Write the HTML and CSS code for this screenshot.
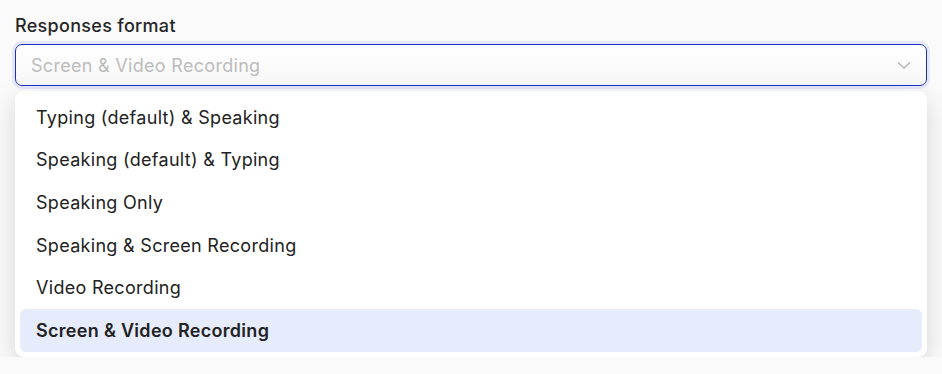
FILE: index.html
```html
<!DOCTYPE html>
<html>
<head>
  <link rel="stylesheet" href="styles.css">
</head>
<body>
<div class="field">
  <label class="field-label">Responses format</label>

  <!-- Select box (open) -->
  <div class="select">
    <span class="select-value">Screen &amp; Video Recording</span>
    <svg class="chevron" width="16" height="16" viewBox="0 0 16 16">
      <path d="M2 5.5 L8 11 L14 5.5" fill="none" stroke="#b4b4b4" stroke-width="1.3"/>
    </svg>
  </div>

  <!-- Options list -->
  <ul class="menu">
    <li class="option">Typing (default) &amp; Speaking</li>
    <li class="option">Speaking (default) &amp; Typing</li>
    <li class="option">Speaking Only</li>
    <li class="option">Speaking &amp; Screen Recording</li>
    <li class="option">Video Recording</li>
    <li class="option selected">Screen &amp; Video Recording</li>
  </ul>
</div>
</body>
</html>
```

FILE: styles.css
```css
/* Reset */
* {
  margin: 0;
  padding: 0;
  box-sizing: border-box;
}

body {
  background-color: #fafafa;
  font-family: Inter, "Noto Sans", sans-serif;
  letter-spacing: 0.3px;
  color: #222;
  padding: 15px 15px 0 15px;
}

.field {
  display: flex;
  flex-direction: column;
  width: 912px;
}

/* Label above the select */
.field-label {
  font-size: 18px;
  font-weight: 500;
  line-height: 22px;
  color: #262626;
  margin-bottom: 7px;
}

/* The select box itself */
.select {
  display: flex;
  align-items: center;
  justify-content: space-between;
  height: 42px;
  padding: 0 14px 0 15px;
  background: linear-gradient(#ffffff, #f7f7f7);
  border: 1.5px solid #1c31c4;
  border-radius: 7px;
  box-shadow: 0 0 0 3px rgba(70, 100, 235, 0.12);
}

.select-value {
  font-size: 18px;
  color: #bcbcbc;
}

.chevron {
  display: block;
}

/* Dropdown list */
.menu {
  list-style: none;
  margin-top: 5px;
  padding: 5px;
  background-color: #fff;
  border-radius: 9px;
  box-shadow: 0 8px 26px rgba(0, 0, 0, 0.15);
}

.option {
  display: flex;
  align-items: center;
  height: 42.67px;
  padding: 0 16px;
  font-size: 18px;
  color: #222;
  border-radius: 6px;
}

.option.selected {
  background-color: #e7ecfc;
  font-weight: 600;
}
```
